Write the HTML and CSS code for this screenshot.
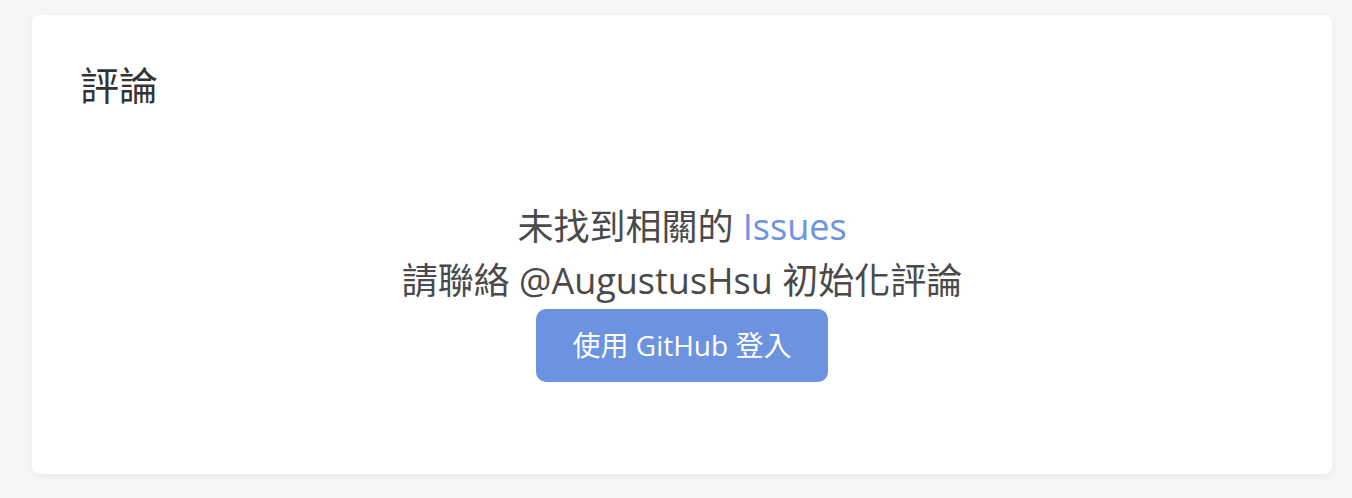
FILE: index.html
```html
<!DOCTYPE html>
<html lang="zh-Hant">
<head>
<meta charset="utf-8">
<title>評論</title>
<link rel="stylesheet" href="styles.css">
</head>
<body>
<section class="card">
  <h2 class="card-title">評論</h2>
  <div class="no-init">
    <p class="line">未找到相關的 <a class="link" href="#">Issues</a></p>
    <p class="line">請聯絡 @AugustusHsu 初始化評論</p>
    <button class="btn" type="button">使用 GitHub 登入</button>
  </div>
</section>
</body>
</html>
```
FILE: styles.css
```css
html, body {
  margin: 0;
  padding: 0;
  background: #f6f6f6;
}
body {
  padding: 15px 20px 24px 32px;
  font-family: "Open Sans", "Noto Sans CJK TC", sans-serif;
  color: #4a4a4a;
}
.card {
  background: #ffffff;
  border-radius: 8px;
  box-shadow: 0 2px 10px rgba(0, 0, 0, 0.06);
  height: 459px;
  box-sizing: border-box;
  padding: 40px 48px 0 48px;
}
.card-title {
  margin: 0;
  font-family: "Noto Sans CJK TC", sans-serif;
  font-weight: 400;
  font-size: 39px;
  line-height: 57px;
  color: #333333;
}
.no-init {
  margin-top: 87px;
  display: flex;
  flex-direction: column;
  align-items: center;
}
.line {
  margin: 0;
  font-size: 36px;
  line-height: 56px;
  color: #4a4a4a;
}
.line + .line {
  margin-top: -2px;
}
.link {
  color: #6c94e0;
  text-decoration: none;
}
.btn {
  font-family: "Open Sans", "Noto Sans CJK TC", sans-serif;
  font-size: 28px;
  line-height: 41px;
  padding: 16px 37px;
  border: 0;
  border-radius: 10px;
  background: #6b93e0;
  color: #ffffff;
}
```
